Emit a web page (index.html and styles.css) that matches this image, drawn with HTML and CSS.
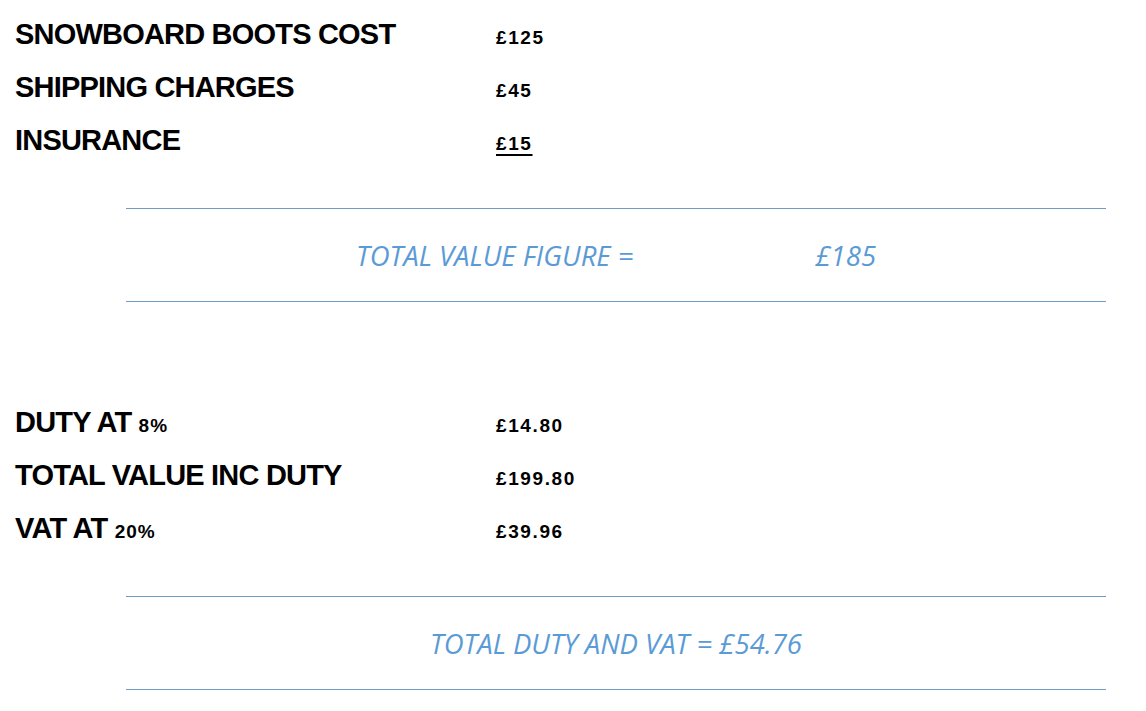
FILE: index.html
```html
<!DOCTYPE html>
<html lang="en">
<head>
<meta charset="utf-8">
<title>Import cost</title>
<link rel="stylesheet" href="styles.css">
</head>
<body>
<div class="page">
  <section class="block">
    <div class="rows">
      <div class="row"><span class="label">SNOWBOARD BOOTS COST</span><span class="value">£125</span></div>
      <div class="row"><span class="label">SHIPPING CHARGES</span><span class="value">£45</span></div>
      <div class="row"><span class="label">INSURANCE</span><span class="value underline">£15</span></div>
    </div>
    <div class="total">
      <span class="total-text">TOTAL VALUE FIGURE =</span><span class="total-gap"></span><span class="total-text">£185</span>
    </div>
  </section>
  <section class="block">
    <div class="rows">
      <div class="row"><span class="label">DUTY AT <span class="small">8%</span></span><span class="value">£14.80</span></div>
      <div class="row"><span class="label">TOTAL VALUE INC DUTY</span><span class="value">£199.80</span></div>
      <div class="row"><span class="label">VAT AT <span class="small">20%</span></span><span class="value">£39.96</span></div>
    </div>
    <div class="total">
      <span class="total-text">TOTAL DUTY AND VAT = £54.76</span>
    </div>
  </section>
</div>
</body>
</html>
```

FILE: styles.css
```css
html, body {
  margin: 0;
  padding: 0;
  background: #ffffff;
}

.page {
  width: 1146px;
  padding-top: 12px;
  display: flex;
  flex-direction: column;
  gap: 98px;
}

.rows {
  padding-left: 15px;
}

.row {
  display: grid;
  grid-template-columns: 481px auto;
  align-items: baseline;
  height: 53px;
  line-height: 44px;
}

.label {
  font-family: "Liberation Sans", Arial, sans-serif;
  font-weight: 700;
  font-size: 29px;
  letter-spacing: -0.8px;
  color: #000000;
}

.small,
.value {
  font-family: "Liberation Sans", Arial, sans-serif;
  font-weight: 700;
  font-size: 19px;
  letter-spacing: 1.6px;
  color: #000000;
}

.small {
  letter-spacing: 1px;
}

.underline {
  justify-self: start;
  text-decoration: underline;
  text-decoration-thickness: 2px;
  text-underline-offset: 4px;
}

.total {
  margin-top: 37px;
  margin-left: 126px;
  width: 980px;
  height: 92px;
  border-top: 1px solid #6f9bc7;
  border-bottom: 1px solid #6f9bc7;
  display: flex;
  justify-content: center;
  align-items: center;
}

.total-text {
  font-family: "Open Sans", "Noto Sans", sans-serif;
  font-style: italic;
  font-size: 27.5px;
  color: #5b9bd5;
  white-space: pre;
}

.total-gap {
  width: 182px;
}
```
